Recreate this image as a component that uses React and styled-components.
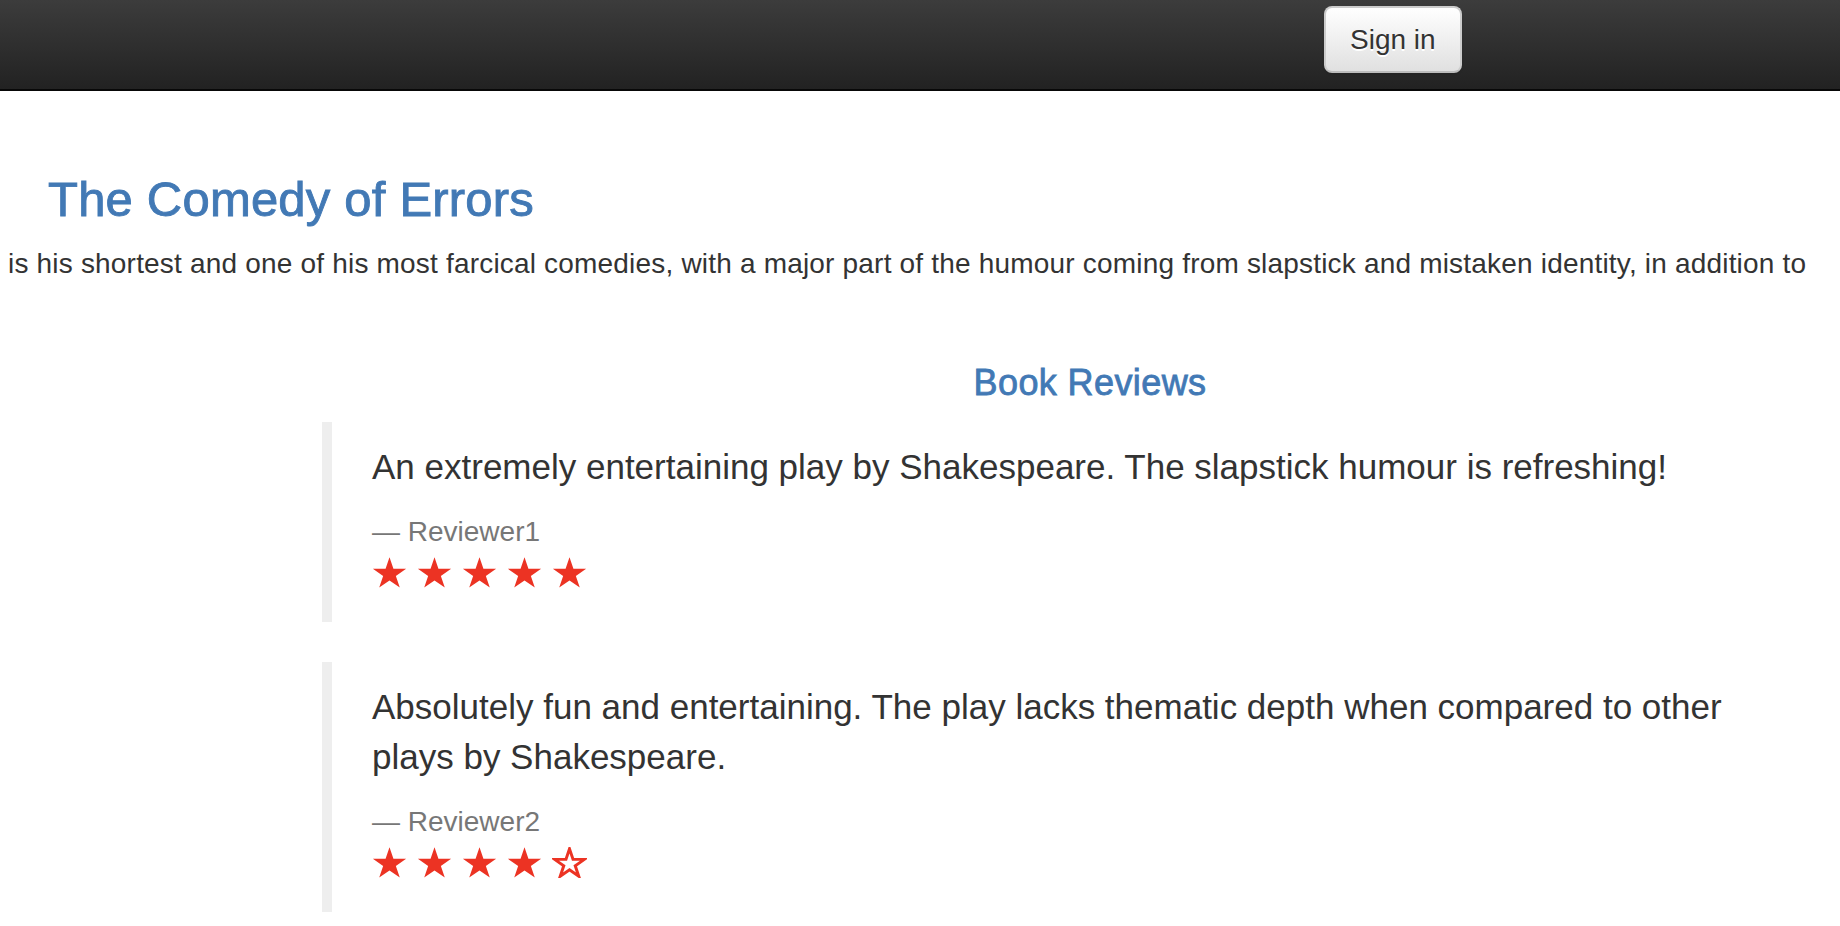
import React from "react";
import styled, { createGlobalStyle } from "styled-components";

const GlobalStyle = createGlobalStyle`
  html, body {
    margin: 0;
    padding: 0;
    overflow: hidden;
    background: #fff;
  }
  body {
    font-family: "Liberation Sans", Arial, Helvetica, sans-serif;
    color: #333;
  }
`;

const Navbar = styled.header`
  height: 89px;
  border-bottom: 2px solid #080808;
  background: linear-gradient(to bottom, #3c3c3c 0%, #222 100%);
  display: flex;
  align-items: flex-start;
  padding-left: 1324px;
  box-sizing: content-box;
`;

const SignInButton = styled.button`
  margin-top: 6px;
  height: 67px;
  box-sizing: border-box;
  padding: 0 24px;
  display: inline-flex;
  align-items: center;
  font-family: "Liberation Sans", Arial, sans-serif;
  font-size: 28px;
  line-height: 40px;
  color: #333;
  text-shadow: 0 2px 0 #fff;
  background: linear-gradient(to bottom, #fff 0%, #e0e0e0 100%);
  border: 2px solid #ccc;
  border-bottom-color: #bcbcbc;
  border-radius: 8px;
  box-shadow: inset 0 2px 0 rgba(255, 255, 255, 0.15), 0 2px 2px rgba(0, 0, 0, 0.075);
  cursor: pointer;
`;

const Main = styled.main`
  padding: 82px 8px 0;
`;

const Title = styled.h1`
  margin: 0 0 17px 40px;
  font-size: 49px;
  line-height: 1.1;
  font-weight: 400;
  letter-spacing: 0.2px;
  color: #4279b5;
  -webkit-text-stroke: 0.9px #4279b5;
`;

const Summary = styled.p`
  margin: 0;
  font-size: 28px;
  line-height: 40px;
  letter-spacing: 0.19px;
  white-space: nowrap;
`;

const ReviewsSection = styled.section`
  margin: 79px 0 0 314px;
  width: 1536px;
`;

const SectionHeading = styled.h2`
  margin: 0 0 20px;
  text-align: center;
  font-size: 36px;
  line-height: 1.1;
  font-weight: 400;
  letter-spacing: 0.4px;
  color: #4279b5;
  -webkit-text-stroke: 0.8px #4279b5;
`;

const Quote = styled.blockquote`
  margin: 0 0 40px;
  padding: 20px 50px 20px 40px;
  border-left: 10px solid #eee;
  font-size: 35px;
`;

const QuoteText = styled.p`
  margin: 0 0 20px;
  line-height: 50px;
`;

const Reviewer = styled.footer`
  font-size: 28px;
  line-height: 40px;
  color: #777;
  &::before {
    content: "\\2014 \\00A0";
  }
`;

const StarRow = styled.div`
  height: 50px;
  box-sizing: border-box;
  padding-top: 5px;
  display: flex;
  align-items: flex-start;
  gap: 10px;
`;

const starPoints = (() => {
  const cx = 19;
  const cy = 19.2;
  const R = 19;
  const r = R * 0.382;
  const pts = [];
  for (let i = 0; i < 10; i++) {
    const a = ((-90 + 36 * i) * Math.PI) / 180;
    const rad = i % 2 === 0 ? R : r;
    pts.push(`${(cx + rad * Math.cos(a)).toFixed(2)},${(cy + rad * Math.sin(a)).toFixed(2)}`);
  }
  return pts.join(" ");
})();

const Star = ({ filled }) => (
  <svg width="35" height="31" viewBox="0 0 38 35" preserveAspectRatio="none">
    {filled ? (
      <polygon points={starPoints} fill="#ec3323" />
    ) : (
      <polygon
        points={starPoints}
        fill="none"
        stroke="#ec3323"
        strokeWidth="3.6"
        strokeLinejoin="miter"
        transform="translate(19 19.2) scale(0.9) translate(-19 -19.2)"
      />
    )}
  </svg>
);

const Rating = ({ value }) => (
  <StarRow>
    {[1, 2, 3, 4, 5].map((n) => (
      <Star key={n} filled={n <= value} />
    ))}
  </StarRow>
);

const reviews = [
  {
    text: "An extremely entertaining play by Shakespeare. The slapstick humour is refreshing!",
    author: "Reviewer1",
    rating: 5,
  },
  {
    text: "Absolutely fun and entertaining. The play lacks thematic depth when compared to other plays by Shakespeare.",
    author: "Reviewer2",
    rating: 4,
  },
];

export default function App() {
  return (
    <>
      <GlobalStyle />
      <Navbar>
        <SignInButton type="button">Sign in</SignInButton>
      </Navbar>
      <Main>
        <Title>The Comedy of Errors</Title>
        <Summary>
          is his shortest and one of his most farcical comedies, with a major part of the humour coming from
          slapstick and mistaken identity, in addition to
        </Summary>
        <ReviewsSection>
          <SectionHeading>Book Reviews</SectionHeading>
          {reviews.map((r) => (
            <Quote key={r.author}>
              <QuoteText>{r.text}</QuoteText>
              <Reviewer>{r.author}</Reviewer>
              <Rating value={r.rating} />
            </Quote>
          ))}
        </ReviewsSection>
      </Main>
    </>
  );
}
